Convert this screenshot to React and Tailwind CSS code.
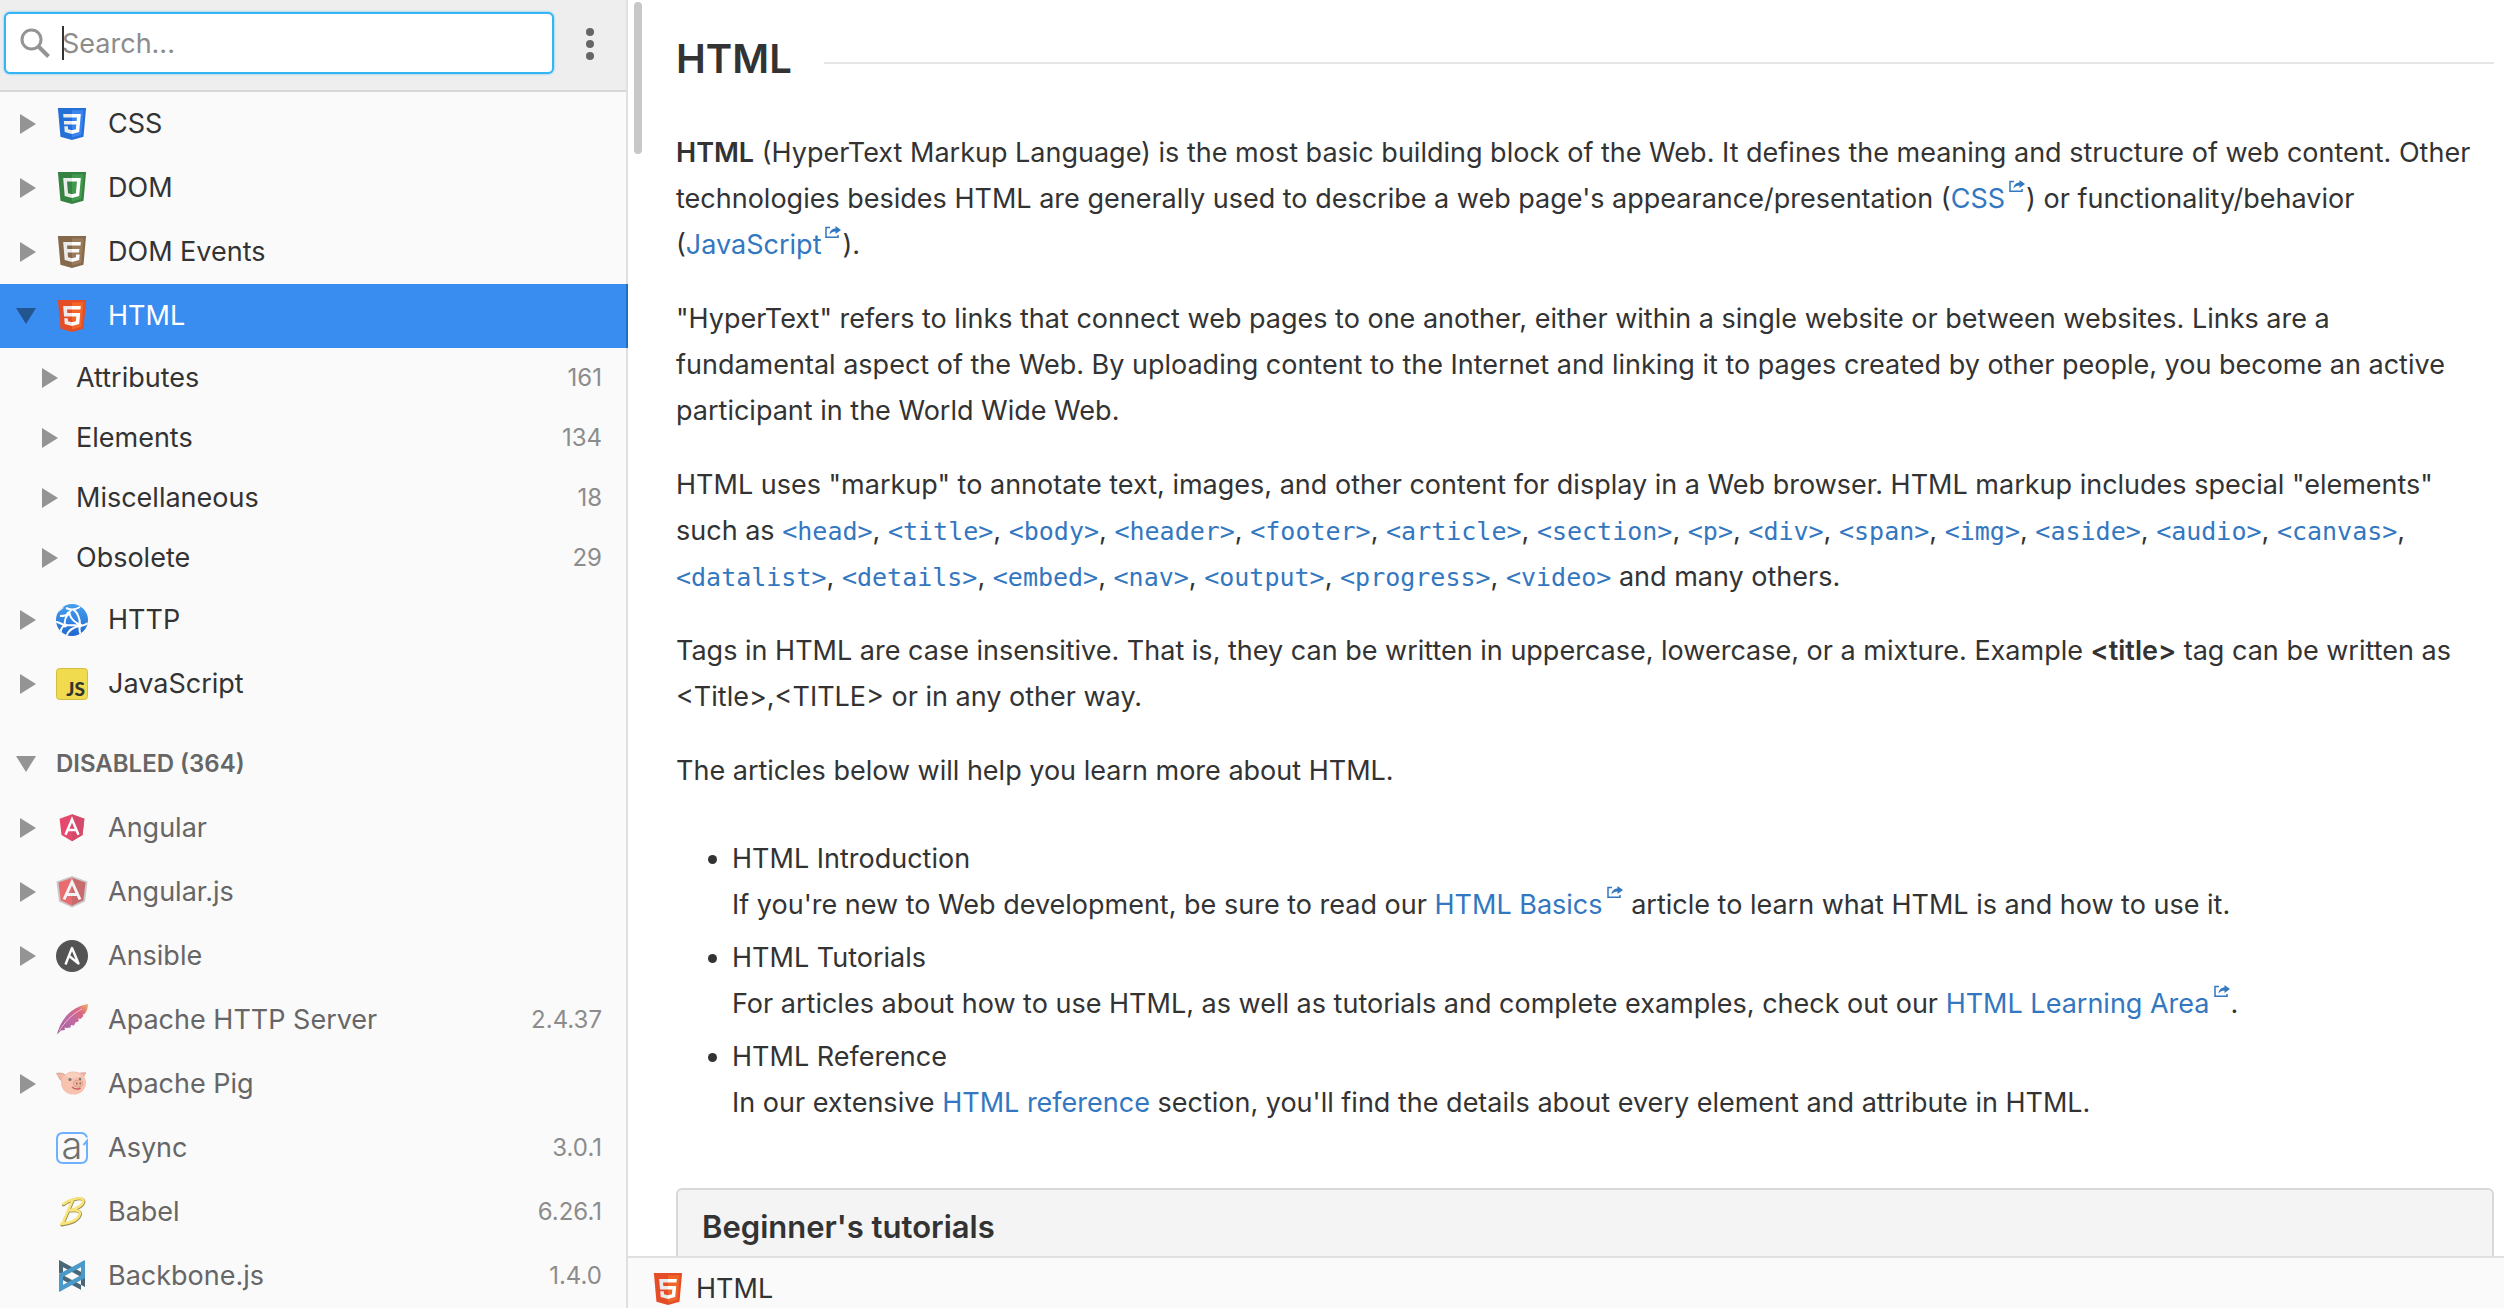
import React from 'react';

// One entry per sidebar row
const docs = [
  { name: 'CSS', icon: 'css', arrow: true },
  { name: 'DOM', icon: 'dom', arrow: true },
  { name: 'DOM Events', icon: 'domEvents', arrow: true },
  {
    name: 'HTML',
    icon: 'html',
    arrow: true,
    open: true,
    types: [
      { name: 'Attributes', count: 161 },
      { name: 'Elements', count: 134 },
      { name: 'Miscellaneous', count: 18 },
      { name: 'Obsolete', count: 29 },
    ],
  },
  { name: 'HTTP', icon: 'http', arrow: true },
  { name: 'JavaScript', icon: 'javascript', arrow: true },
];

const disabledDocs = [
  { name: 'Angular', icon: 'angular', arrow: true },
  { name: 'Angular.js', icon: 'angularjs', arrow: true },
  { name: 'Ansible', icon: 'ansible', arrow: true },
  { name: 'Apache HTTP Server', icon: 'apache', version: '2.4.37' },
  { name: 'Apache Pig', icon: 'pig', arrow: true },
  { name: 'Async', icon: 'async', version: '3.0.1' },
  { name: 'Babel', icon: 'babel', version: '6.26.1' },
  { name: 'Backbone.js', icon: 'backbone', version: '1.4.0' },
];

const elements = [
  'head', 'title', 'body', 'header', 'footer', 'article', 'section', 'p', 'div', 'span', 'img',
  'aside', 'audio', 'canvas', 'datalist', 'details', 'embed', 'nav', 'output', 'progress', 'video',
];

function Shield({ dark, light, left, right }) {
  return (
    <svg viewBox="0 0 512 512" className="h-8 w-8">
      <path fill={dark} d="M71 460 30 0h451l-41 460-185 52z" />
      <path fill={light} d="m256 472 149-41 35-394H256z" />
      <path fill="#ebebeb" d={left} />
      <path fill="#fff" d={right} />
    </svg>
  );
}

const icons = {
  css: (
    <Shield
      dark="#2470d6"
      light="#3c84f0"
      left="M256 94H115l5 56h136zM256 208H125l5 57h126zM256 355l-64-17-3-45h-57l7 89 117 32z"
      right="M256 94h141l-26 288-115 32v-59l62-17 7-73h-69v-57h74l6-58h-80z"
    />
  ),
  dom: (
    <Shield
      dark="#368242"
      light="#429a4e"
      left="M256 94H115l24 288 117 32v-59l-64-17-16-188h80z"
      right="M256 94h141l-26 288-115 32v-59l62-17 18-188h-80z"
    />
  ),
  domEvents: (
    <Shield
      dark="#84694d"
      light="#9a7c5c"
      left="M256 94H115l24 288 117 32v-59l-64-17-5-73h69v-57h-75l-5-58h80z"
      right="M256 94h141l-5 56H256zM256 208h118l-5 57H256zM256 355l62-17 4-42h57l-8 86-115 32z"
    />
  ),
  html: (
    <Shield
      dark="#e44d26"
      light="#f16529"
      left="M256 208h-75l-5-58h80V94H114l15 171h127zM256 355l-64-17-4-45h-56l7 89 117 32z"
      right="M255 208v57h70l-7 73-63 17v59l116-32 16-174zM255 94v56h137l5-56z"
    />
  ),
  http: (
    <svg viewBox="0 0 32 32" className="h-8 w-8">
      <defs>
        <linearGradient id="globe" x1="0" y1="0" x2="0" y2="1">
          <stop offset="0" stopColor="#46a0ee" />
          <stop offset="1" stopColor="#2068d0" />
        </linearGradient>
        <clipPath id="globeClip">
          <circle cx="16" cy="16" r="16" />
        </clipPath>
      </defs>
      <circle cx="16" cy="16" r="16" fill="url(#globe)" />
      <g fill="none" stroke="#fff" strokeWidth="2" clipPath="url(#globeClip)">
        <path d="M1 8l6-5M10 4c4 2 9 2 14-1M12 10l4-5M4 12c3 0 6 0 8-2M12 10c-3 4-4 8-3 12M13 9c2 6 6 10 12 12M17 5c5 4 7 9 7 16M0 18c3 0 6 2 9 4M9 21c5 0 10 0 15 1M5 30c-1-4 1-7 4-9M32 19c-3 2-5 3-8 3M10 33c2-6 7-10 14-11M25 31c-2-4-2-6-1-9" />
      </g>
      <g fill="#fff">
        <circle cx="12.500" cy="9.500" r="2" />
        <circle cx="9" cy="21.500" r="2" />
        <circle cx="24" cy="21.500" r="2" />
      </g>
    </svg>
  ),
  javascript: (
    <svg viewBox="0 0 32 32" className="h-8 w-8">
      <rect x=".5" y=".5" width="31" height="31" rx="3" fill="#f0db4f" stroke="#d3bf3c" />
      <text x="29" y="28" textAnchor="end" fontFamily="Lato, sans-serif" fontWeight="900" fontSize="19" fill="#323330">
        JS
      </text>
    </svg>
  ),
  angular: (
    <svg viewBox="0 0 32 32" className="h-8 w-8">
      <path fill="#dd0031" d="M16 2.300 3.600 6.700l1.900 16.400L16 29.300l10.500-6.200 1.900-16.400z" />
      <path fill="#c3002f" d="M16 2.300v27l10.500-6.200 1.900-16.400z" />
      <path fill="none" stroke="#fff" strokeWidth="2.500" d="M9.500 22.800 16 7.500l6.500 15.300M12 18h8" />
    </svg>
  ),
  angularjs: (
    <svg viewBox="0 0 32 32" className="h-8 w-8">
      <path fill="#b3b3b3" d="M16 0 .5 5.500 3 25.500 16 31.500l13-6 2.500-20z" />
      <path fill="#e23237" d="M16 1.800 2.500 6.500l2.200 17.800L16 29.800z" />
      <path fill="#b52e31" d="M16 1.800v28l11.300-5.500 2.200-17.800z" />
      <path fill="none" stroke="#f2f2f2" strokeWidth="3" d="M8 23.500 16 6l8 17.500M11 18.500h10" />
    </svg>
  ),
  ansible: (
    <svg viewBox="0 0 32 32" className="h-8 w-8">
      <circle cx="16" cy="16" r="16" fill="#0f0f0f" />
      <path fill="none" stroke="#fff" strokeWidth="2.400" strokeLinejoin="round" d="M9.500 24.500 16 8l6.500 15.500-10-8" />
    </svg>
  ),
  apache: (
    <svg viewBox="0 0 32 32" className="h-8 w-8">
      <defs>
        <linearGradient id="feather" x1="0" y1="1" x2="1" y2="0">
          <stop offset="0" stopColor="#7a1b6c" />
          <stop offset=".45" stopColor="#a42f83" />
          <stop offset=".75" stopColor="#cb2a4c" />
          <stop offset="1" stopColor="#f59a23" />
        </linearGradient>
      </defs>
      <path
        fill="url(#feather)"
        d="M1 30.500C3 22 8 12 17 6 22 2.500 27 1 32 0c0 4-1 7-3.500 10l-2 .5 1 1.500-3 3-2.500-.5 1 2.500-3.500 1.500-1.500 3-3-.5-.5 2.500-4 .5-2-.5.500 2.500-4 .5z"
      />
      <path fill="none" stroke="#e8a0c8" strokeWidth="1" d="M3 27C9 18 16 10 26 5" />
    </svg>
  ),
  pig: (
    <svg viewBox="0 0 32 32" className="h-8 w-8">
      <path fill="#ee9c80" stroke="#a5644d" strokeWidth=".6" d="M.5 5.500c3-1 6-.5 9 1.500L6 13C3 12 3 8 .5 5.500zM30 5c-2-.5-5-.5-8 1l4 5c2.500-1 1.500-4 4-6z" />
      <ellipse cx="17.500" cy="15" rx="12.500" ry="11.500" fill="#f6ab8e" />
      <path fill="#f9bfa5" d="M9 8c4-5 13-4 16 0-3 2-12 3-16 0z" />
      <circle cx="14" cy="11.500" r="1.500" fill="#31434a" />
      <circle cx="24" cy="11" r="1.200" fill="#31434a" />
      <ellipse cx="22" cy="15.500" rx="4.500" ry="3.500" fill="#ef9a7c" stroke="#b66a50" strokeWidth=".7" />
      <path fill="#6b3527" d="M20 14.500h1.500v2H20zM23.500 14.500H25v2h-1.500z" />
      <path fill="none" stroke="#b2232a" strokeWidth="1.500" d="M16 19c3 2.500 6 2.500 8.500 1" />
    </svg>
  ),
  async: (
    <svg viewBox="0 0 32 32" className="h-8 w-8 overflow-visible">
      <path
        fill="none"
        stroke="#3391ff"
        strokeWidth="2"
        d="M31 5.500C30 2.500 28 1 25 1H7C3 1 1 3 1 7v18c0 4 2 6 6 6h18c4 0 6-2 6-6V9l-3.500 4"
      />
      <text x="16" y="27" textAnchor="middle" fontFamily="Inter, sans-serif" fontWeight="300" fontSize="38" fill="#333">
        a
      </text>
    </svg>
  ),
  babel: (
    <svg viewBox="0 0 32 32" className="h-8 w-8">
      <g fill="none" strokeLinecap="round" strokeLinejoin="round">
        <path stroke="#6b5a12" strokeWidth="3" d="M17 5 7.500 27M7.500 9C13 4 26 .5 27.800 5c1 4-6 8-13 10 8-1 11 1 9 5-2 5-10 8-18 9" />
        <path stroke="#f9dc3e" strokeWidth="2.500" d="M16.500 4.500 7 26.500M7.500 8C13 3.500 26 0 27.300 4.500c1 4-6 8-13 10 8-1 11 1 9 5-2 5-10 7.500-18 8.500" />
      </g>
    </svg>
  ),
  backbone: (
    <svg viewBox="0 0 32 32" className="h-8 w-8">
      <path fill="#002a41" d="M3 0l26 14v5L3 5zM3 0l4 2v13H3zM29 32v-5L3 13v5zM29 32l-4-2V17h4z" />
      <path fill="#0071b5" d="M29 0v5L3 19v-5zM29 0v17h-4V2zM3 32v-5l26-14v5zM3 32V15h4v15z" />
    </svg>
  ),
};

function Arrow({ open, active }) {
  return (
    <svg viewBox="0 0 20 20" className={`h-5 w-5 shrink-0 ${active ? 'fill-[#235591]' : 'fill-[#949494]'}`}>
      {open ? <path d="M0 2h20L10 18z" /> : <path d="M4 0l16 10L4 20z" />}
    </svg>
  );
}

function DocRow({ doc, disabled }) {
  return (
    <a
      href="#"
      className={`flex h-16 items-center pr-6 pl-4 ${
        doc.open ? '-mr-0.5 border-r-2 border-[#1b6fc5] bg-[#398df0] text-white' : disabled ? 'text-[#666]' : ''
      }`}
    >
      {doc.arrow ? <Arrow open={doc.open} active={doc.open} /> : <span className="w-5" />}
      <span className={`mr-5 ml-5 ${disabled ? 'opacity-70' : ''}`}>{icons[doc.icon]}</span>
      <span className="grow">{doc.name}</span>
      {doc.version && <span className="text-2xl text-[#8c8c8c]">{doc.version}</span>}
    </a>
  );
}

function Sidebar() {
  return (
    <aside className="flex w-[628px] shrink-0 flex-col border-r-2 border-[#e0e0e0] bg-[#fafafa]">
      <form className="flex h-[92px] shrink-0 items-start border-b-2 border-[#d8d8d8] bg-[#eee] pt-3 pl-1">
        <label className="relative flex h-[62px] w-[550px] items-center rounded-md border-2 border-[#35b5f4] bg-white pl-3.5 shadow-[0_0_2px_#35b5f4]">
          <svg viewBox="0 0 30 30" className="h-[30px] w-[30px]" fill="none" stroke="#949494">
            <circle cx="11.500" cy="11.500" r="9.500" strokeWidth="3" />
            <path strokeWidth="4" d="m18.500 18.500 10 10" />
          </svg>
          <input
            type="search"
            aria-label="Search"
            placeholder="Search..."
            className="mt-0.5 ml-3 grow bg-transparent outline-none placeholder:text-[#8c8c8c]"
          />
          {/* text cursor */}
          <span className="absolute top-3 left-14 h-[34px] w-0.5 bg-[#333]" />
        </label>
        <button type="button" aria-label="Menu" className="flex h-16 w-[72px] items-center justify-center">
          <svg viewBox="0 0 8 32" className="h-8 w-2 fill-[#666]">
            <circle cx="4" cy="4" r="4" />
            <circle cx="4" cy="16" r="4" />
            <circle cx="4" cy="28" r="4" />
          </svg>
        </button>
      </form>
      <nav>
        {docs.map((doc) => (
          <div key={doc.name}>
            <DocRow doc={doc} />
            {doc.types?.map((type) => (
              <a key={type.name} href="#" className="flex h-[60px] items-center pr-6 pl-[38px]">
                <Arrow />
                <span className="ml-[18px] grow">{type.name}</span>
                <span className="text-2xl text-[#8c8c8c]">{type.count}</span>
              </a>
            ))}
          </div>
        ))}
        <button type="button" className="mt-4 flex h-16 w-full items-center pl-4 text-2xl font-semibold text-[#666]">
          <Arrow open />
          <span className="ml-5">DISABLED (364)</span>
        </button>
        {disabledDocs.map((doc) => (
          <DocRow key={doc.name} doc={doc} disabled />
        ))}
      </nav>
    </aside>
  );
}

function ExternalLink({ children }) {
  return (
    <a href="#" className="text-[#3377c0]">
      {children}
      <svg viewBox="0 0 16 12" className="mr-px ml-1 inline h-3 w-4 align-[16px]">
        <path fill="none" stroke="currentColor" strokeWidth="1.500" d="M5 1.500H1v9.700h12V9" />
        <path fill="currentColor" d="M10.500 0 16 4l-5.500 4V5.500C8 5.500 6 6.500 4.500 8.500c.3-3.500 2.500-6 6-6z" />
      </svg>
    </a>
  );
}

function Article() {
  return (
    <article className="flex flex-col gap-7 pt-9 pr-2.5 pl-12">
      <h1 className="mb-5 flex h-[46px] items-center gap-8 text-[40px] font-semibold after:mt-2 after:h-0.5 after:grow after:bg-[#e5e5e5]">
        HTML
      </h1>
      <p>
        <strong className="font-semibold">HTML</strong> (HyperText Markup Language) is the most basic building block of
        the Web. It defines the meaning and structure of web content. Other technologies besides HTML are generally used
        to describe a web page's appearance/presentation (<ExternalLink>CSS</ExternalLink>) or functionality/behavior (
        <ExternalLink>JavaScript</ExternalLink>).
      </p>
      <p>
        "HyperText" refers to links that connect web pages to one another, either within a single website or between
        websites. Links are a fundamental aspect of the Web. By uploading content to the Internet and linking it to
        pages created by other people, you become an active participant in the World Wide Web.
      </p>
      <p>
        HTML uses "markup" to annotate text, images, and other content for display in a Web browser. HTML markup
        includes special "elements" such as{' '}
        {elements.map((el, i) => (
          <React.Fragment key={el}>
            <a href="#" className="font-['DejaVu_Sans_Mono',monospace] text-[25px] leading-none text-[#3377c0]">
              &lt;{el}&gt;
            </a>
            {i < elements.length - 1 ? ', ' : ' '}
          </React.Fragment>
        ))}
        and many others.
      </p>
      <p>
        Tags in HTML are case insensitive. That is, they can be written in uppercase, lowercase, or a mixture. Example{' '}
        <strong className="font-semibold">&lt;title&gt;</strong> tag can be written as &lt;Title&gt;,&lt;TITLE&gt; or in
        any other way.
      </p>
      <p>The articles below will help you learn more about HTML.</p>
      <ul className="mt-3.5 flex list-disc flex-col gap-[7px] pl-14">
        <li>
          HTML Introduction
          <p>
            If you're new to Web development, be sure to read our <ExternalLink>HTML Basics</ExternalLink> article to
            learn what HTML is and how to use it.
          </p>
        </li>
        <li>
          HTML Tutorials
          <p>
            For articles about how to use HTML, as well as tutorials and complete examples, check out our{' '}
            <ExternalLink>HTML Learning Area</ExternalLink>.
          </p>
        </li>
        <li>
          HTML Reference
          <p>
            In our extensive{' '}
            <a href="#" className="text-[#3377c0]">
              HTML reference
            </a>{' '}
            section, you'll find the details about every element and attribute in HTML.
          </p>
        </li>
      </ul>
      <h2 className="mt-[34px] h-24 rounded-md border-2 border-[#d8d8d8] bg-[#f4f4f4] px-6 pt-3.5 text-[31px] font-semibold">
        Beginner's tutorials
      </h2>
    </article>
  );
}

export default function App() {
  return (
    <div className="flex h-screen overflow-hidden bg-white font-['Inter',sans-serif] text-[27px] leading-[46px] text-[#333]">
      <Sidebar />
      <div className="relative flex min-w-0 grow flex-col">
        {/* scrollbar thumb */}
        <span className="absolute top-0.5 left-1.5 h-[152px] w-2 rounded bg-[#c8c8c8]" />
        <main className="min-h-0 grow overflow-hidden">
          <Article />
        </main>
        <footer className="flex h-[52px] shrink-0 items-center gap-3 border-t-2 border-[#e0e0e0] bg-[#fafafa] pt-3 pl-6">
          {icons.html}
          <span>HTML</span>
        </footer>
      </div>
    </div>
  );
}
